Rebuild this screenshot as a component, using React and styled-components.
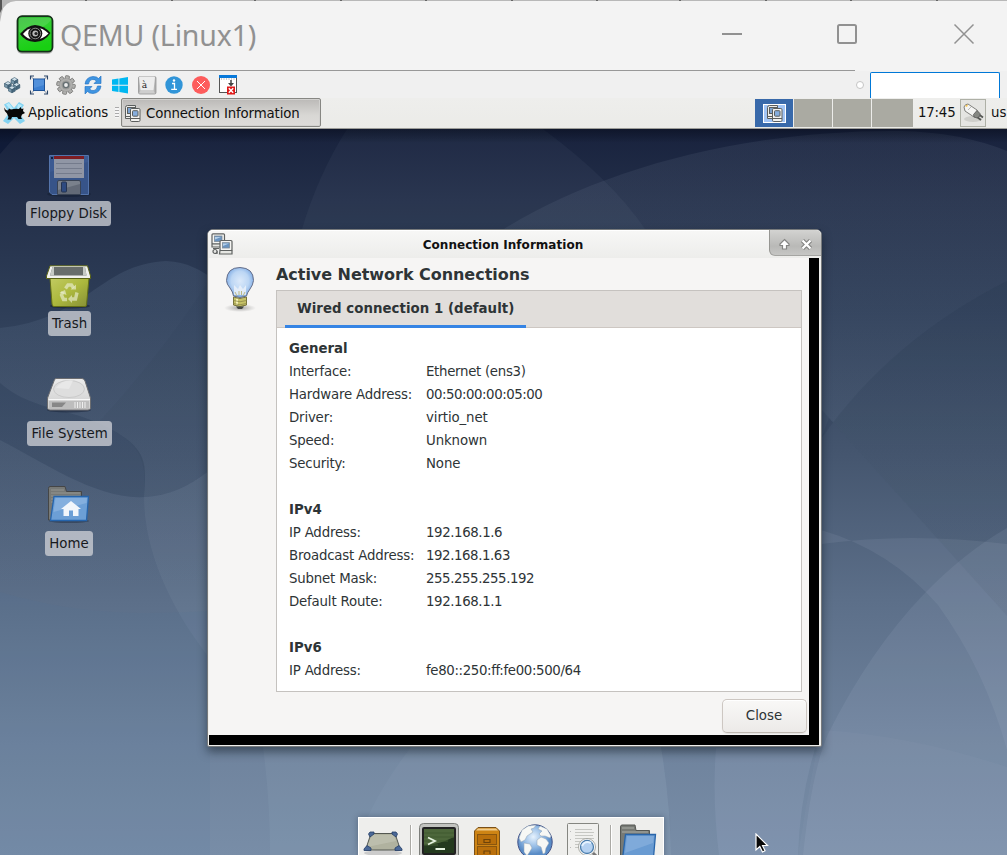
import React from "react";
import styled, { createGlobalStyle } from "styled-components";

const GlobalStyle = createGlobalStyle`
  html, body { margin: 0; padding: 0; overflow: hidden; }
  body { background: #f2f2f2; }
  * { box-sizing: border-box; }
  svg { display: block; flex: none; }
`;

const Screen = styled.div`
  width: 1007px;
  height: 855px;
  display: flex;
  flex-direction: column;
  overflow: hidden;
  font-family: "DejaVu Sans", sans-serif;
  font-size: 13.33px;
  color: #2e3436;
`;

const TitleBar = styled.header`
  height: 71px;
  flex: none;
  position: relative;
  display: flex;
  align-items: flex-start;
  background: #f3f3f3;
  padding: 15px 32px 0 15px;
`;
const FrameEdge = styled.svg`
  position: absolute;
  left: 0;
  top: 0;
`;
const AppTitle = styled.h1`
  margin: 0 0 0 5px;
  font: 400 28.5px/40px "Noto Sans", sans-serif;
  letter-spacing: -0.15px;
  color: #919191;
  white-space: nowrap;
`;
const WindowControls = styled.div`
  display: flex;
  justify-content: space-between;
  width: 254px;
  margin: 7px 0 0 auto;
`;

const Toolbar = styled.div`
  height: 27px;
  flex: none;
  display: flex;
  align-items: flex-start;
  gap: 5px;
  padding: 3px 7px 0 1px;
  background: #f0f0f0;
`;
const Spacer = styled.div`
  flex: 1;
`;
const Knob = styled.div`
  width: 8px;
  height: 8px;
  margin: 7px 1px 0 0;
  border-radius: 50%;
  border: 1px solid #c4c4c4;
  background: #fff;
`;
const SearchField = styled.div`
  width: 130px;
  height: 26px;
  margin-top: -2px;
  border: 1px solid #0078d7;
  border-bottom: 0;
  border-radius: 2px 2px 0 0;
  background: #fff;
`;

const Panel = styled.nav`
  height: 31px;
  flex: none;
  display: flex;
  align-items: center;
  background: linear-gradient(#eeeeec, #ebebe8);
  border-bottom: 1px solid #9c9c98;
  color: #111;
  padding: 0 0 1px 3px;
  white-space: nowrap;
  overflow: hidden;
`;
const MenuLabel = styled.span`
  margin-left: 3px;
  width: 87px;
  line-height: 28px;
  letter-spacing: -0.1px;
`;
const Grip = styled.div`
  width: 4px;
  height: 11px;
  margin-right: 2px;
  background: repeating-linear-gradient(#aaa 0 1px, #f6f6f6 1px 3px);
`;
const TaskButton = styled.div`
  width: 200px;
  height: 29px;
  display: flex;
  align-items: center;
  gap: 5px;
  padding: 2px 0 0 2px;
  border: 1px solid #878783;
  border-radius: 2px;
  background: linear-gradient(#bbb9b7, #d8d7d4 60%, #dddbd9);
  box-shadow: inset 0 0 0 1px #d2d1cf;
  letter-spacing: -0.15px;
`;
const Pager = styled.div`
  display: flex;
  gap: 1px;
  height: 28px;
  margin-left: auto;
`;
const Workspace = styled.div`
  width: ${(p) => p.$w}px;
  background: ${(p) => (p.$active ? "#3869aa" : "#aaaaa2")};
  display: flex;
  align-items: center;
  justify-content: center;
`;
const MiniWindow = styled.div`
  width: 23px;
  height: 19px;
  border: 1px solid #fff;
  background: #a2c5f6;
  display: flex;
  align-items: center;
  justify-content: center;
  margin-top: 1px;
`;
const Clock = styled.span`
  width: 47px;
  padding-left: 5px;
  line-height: 28px;
  letter-spacing: -0.2px;
`;
const TrayButton = styled.div`
  width: 26px;
  height: 28px;
  border: 1px solid #aeb0a6;
  background: #e5e5e2;
  display: flex;
  align-items: center;
  justify-content: center;
`;
const UserName = styled.span`
  width: 21px;
  padding-left: 5px;
`;

const Desktop = styled.main`
  flex: 1;
  position: relative;
  overflow: hidden;
`;
const Wallpaper = styled.svg`
  position: absolute;
  inset: 0;
`;
const IconColumn = styled.div`
  position: relative;
  width: 138px;
  padding-top: 22px;
  display: flex;
  flex-direction: column;
`;
const Shortcut = styled.div`
  height: 110px;
  display: flex;
  flex-direction: column;
  align-items: center;
`;
const ShortcutLabel = styled.span`
  height: 25px;
  margin: 2px 0 0 ${(p) => p.$shift}px;
  line-height: 25px;
  padding: 0 4px;
  border-radius: 3.5px;
  background: rgba(203, 205, 212, 0.79);
  color: #16191d;
  white-space: nowrap;
`;

const Dialog = styled.section`
  position: absolute;
  left: 207px;
  top: 100px;
  width: 615px;
  height: 518px;
  display: flex;
  flex-direction: column;
  border: 1px solid #777a7c;
  border-radius: 6px 6px 2px 2px;
  background: #eeeeec;
  padding: 0 2px 1px 1px;
  box-shadow: 0 5px 10px rgba(10, 20, 30, 0.5);
`;
const DialogBar = styled.div`
  height: 28px;
  flex: none;
  display: flex;
  align-items: center;
  margin: 0 -2px 0 -1px;
  border-radius: 5px 5px 0 0;
  background: linear-gradient(#f7f7f6, #ededeb);
  box-shadow: inset 0 1px 0 #fff;
  padding-left: 3px;
`;
const DialogTitle = styled.h2`
  flex: 1;
  margin: 0;
  padding: 1px 18px 0 22px;
  text-align: center;
  font: 700 12px/28px "DejaVu Sans", sans-serif;
  letter-spacing: 0.03px;
  color: #111;
`;
const DialogButtons = styled.div`
  width: 52px;
  height: 26px;
  align-self: flex-start;
  display: flex;
  align-items: center;
  justify-content: space-between;
  padding: 3px 8px 0 8px;
  border-left: 1px solid #969692;
  border-bottom: 1px solid #a5a5a2;
  border-radius: 0 5px 0 6px;
  background: linear-gradient(#d3d3d1, #b9b9b7 65%, #c6c6c4);
`;
const Backing = styled.div`
  flex: 1;
  background: #000;
  padding: 0 10px 10px 0;
  display: flex;
`;
const DialogBody = styled.div`
  flex: 1;
  display: flex;
  background: #f6f5f4;
`;
const BulbSlot = styled.div`
  width: 67px;
  padding: 6px 0 0 14px;
`;
const Content = styled.div`
  flex: 1;
  display: flex;
  flex-direction: column;
  padding-right: 2px;
`;
const Heading = styled.h3`
  margin: 0;
  height: 32px;
  font: 700 16px/33px "DejaVu Sans", sans-serif;
  letter-spacing: -0.04px;
`;
const Notebook = styled.div`
  width: 526px;
  height: 402px;
  border: 1px solid #c5c2bf;
  background: #fff;
`;
const TabStrip = styled.div`
  height: 37px;
  padding-left: 8px;
  background: #e1dedb;
  border-bottom: 1px solid #cdc7c2;
  display: flex;
`;
const Tab = styled.div`
  width: 241px;
  height: 37px;
  padding-left: 12px;
  border-bottom: 3px solid #3584e4;
  font-weight: 700;
  line-height: 35px;
  letter-spacing: 0.04px;
  white-space: nowrap;
`;
const InfoGrid = styled.dl`
  margin: 0;
  padding: 9px 0 0 12px;
  display: grid;
  grid-template-columns: 137px 1fr;
  grid-auto-rows: 23px;
  line-height: 23px;
  white-space: nowrap;
`;
const Group = styled.dt`
  grid-column: 1 / -1;
  font-weight: 700;
`;
const Blank = styled.div`
  grid-column: 1 / -1;
`;
const Label = styled.dt`
  letter-spacing: -0.18px;
`;
const Value = styled.dd`
  margin: 0;
  letter-spacing: ${(p) => p.$track}px;
`;
const CloseButton = styled.button`
  align-self: flex-end;
  width: 85px;
  height: 34px;
  margin-top: 7px;
  border: 1px solid #cdc7c2;
  border-bottom-color: #bfb8b1;
  border-radius: 5px;
  background: linear-gradient(#f9f8f7, #eceae8);
  box-shadow: inset 0 1px #fff, 0 1px 1px rgba(0, 0, 0, 0.08);
  font: 400 13.33px "DejaVu Sans", sans-serif;
  color: #2e3436;
  padding: 0 1px 2px 0;
`;

const Dock = styled.div`
  position: absolute;
  left: 358px;
  top: 688px;
  width: 306px;
  height: 50px;
  display: flex;
  align-items: flex-start;
  background: #eeeeec;
  border: 1px solid #fff;
  padding: 3px 0 0;
  box-shadow: 0 0 6px rgba(20, 30, 50, 0.35);
`;
const DockSlot = styled.div`
  width: 48px;
  display: flex;
  justify-content: center;
`;
const DockSeparator = styled.div`
  width: 2px;
  height: 40px;
  margin: 4px ${(p) => p.$r}px 0 ${(p) => p.$l}px;
  background: linear-gradient(90deg, #aaa9a4 50%, #fff 50%);
`;
const Pointer = styled.svg`
  position: absolute;
  left: 755px;
  top: 704px;
`;

const EyeLogo = () => (
  <svg width="40" height="40" viewBox="0 0 40 40">
    <defs>
      <linearGradient id="eyeg" x1="0" y1="0" x2="0.3" y2="1">
        <stop offset="0" stopColor="#35b83a" />
        <stop offset="0.45" stopColor="#2fd02e" />
        <stop offset="1" stopColor="#18cf12" />
      </linearGradient>
    </defs>
    <rect x="2" y="3" width="36" height="36" rx="5" fill="#000" opacity=".25" />
    <rect x="2.500" y="1.200" width="35" height="35.500" rx="4.500" fill="url(#eyeg)" stroke="#153019" strokeWidth="1.800" />
    <path d="M4 3h32v2Q28 16 4 17z" fill="#fff" opacity=".12" />
    <path d="M5 19Q12 10.500 20 10Q29 10.500 35.500 18Q30 26.500 20 27Q10 26.500 5 19z" fill="#111" />
    <path d="M8 19Q13 12.500 20 12.500Q28 12.500 33.500 18.500Q28 24.500 20 24.500Q12 24.500 8 19z" fill="#fff" />
    <circle cx="20.300" cy="18.500" r="7" fill="#111" />
    <circle cx="20.300" cy="18.500" r="5.300" fill="none" stroke="#8a8a8a" strokeWidth="1" />
    <circle cx="20.300" cy="18.500" r="2.900" fill="#b9b9b9" />
    <circle cx="21" cy="18.500" r="1.600" fill="#222" />
  </svg>
);

const Ico = ({ children }) => (
  <svg width="22" height="22" viewBox="-11 -11 22 22">{children}</svg>
);

const Cubes = () => (
  <Ico>
    {[[2.5, -4], [-4, 0], [4.5, 1.2], [0, 4.3]].map(([x, y], i) => (
      <g key={i} transform={`translate(${x} ${y})`} stroke="#36566a" strokeWidth=".6">
        <path d="M-3.500-1.500L0-3.500L3.300-1.500L0 .3z" fill="#cfe0ea" />
        <path d="M-3.500-1.500L0 .3V3.500L-3.500 1.800z" fill="#7796a9" />
        <path d="M3.300-1.500L0 .3V3.500L3.300 1.800z" fill="#48697f" />
      </g>
    ))}
  </Ico>
);
const Fullscreen = () => (
  <Ico>
    <rect x="-5.500" y="-6" width="11" height="11.500" fill="#3d80d2" stroke="#1d5298" />
    <path d="M-5-5.500H5V0L-5 3z" fill="#6aa2e4" opacity=".5" />
    <path d="M-8.500-5.500V-9H-5M5-9H8.500V-5.500M8.500 5.500V9H5M-5 9H-8.500V5.500" fill="none" stroke="#2d4668" strokeWidth="1.100" />
    <path d="M-8.500-9L-5.500-6M8.500-9L5.500-6M8.500 9L5.500 6M-8.500 9L-5.500 6" stroke="#2d4668" strokeWidth=".6" />
  </Ico>
);
const Gear = () => (
  <Ico>
    {[0, 45, 90, 135].map((a) => (
      <rect key={a} x="-2" y="-9.300" width="4" height="18.600" rx=".8" fill="#b0b0ae" stroke="#747472" strokeWidth=".8" transform={`rotate(${a + 10})`} />
    ))}
    <circle r="6.500" fill="#b0b0ae" stroke="#888" strokeWidth=".3" />
    <circle r="4.500" fill="#9a9a98" />
    <circle r="2.600" fill="#ececec" stroke="#667073" strokeWidth="1.400" />
  </Ico>
);
const Refresh = () => (
  <Ico>
    <path d="M-8-1Q-7-8 0-8.500Q4-8.500 5.500-6.500L8-9V-1.500H1L3.500-4Q1.500-6 -1-5.500Q-4-5-4.500-1z" fill="#3f95e2" stroke="#1b6cbf" strokeWidth=".6" />
    <path d="M8 1Q7 8 0 8.500Q-4 8.500-5.500 6.500L-8 9V1.500H-1L-3.500 4Q-1.500 6 1 5.500Q4 5 4.500 1z" fill="#3f95e2" stroke="#1b6cbf" strokeWidth=".6" />
  </Ico>
);
const Win = () => (
  <Ico>
    <path d="M-8-5.500L-1.500-6.500V-.3H-8zM-.7-6.600L8-8V-.3H-.7zM-8 .7H-1.500V7L-8 6zM-.7 .7H8V8.500L-.7 7.100z" fill="#00b7f1" />
  </Ico>
);
const KeyA = () => (
  <Ico>
    <rect x="-8.500" y="-8.500" width="17.500" height="17.500" rx="1.500" fill="#b4b4b4" stroke="#8b8b8b" strokeWidth=".7" />
    <path d="M-8-7.500Q-8-8.500-7-8.500H7Q8-8.500 8-7.500L6.500 5.500H-6.500z" fill="#ededed" />
    <path d="M-6.500 5.500H6.500L8 8.500H-8z" fill="#cecece" />
    <text x="-5.300" y="2.600" fontSize="9" fill="#222" fontFamily="DejaVu Serif, serif">à</text>
  </Ico>
);
const Info = () => (
  <Ico>
    <circle r="8.700" fill="#3195d8" />
    <path d="M-2-1.500H.5V4M-2.800 4.300H3" stroke="#fff" strokeWidth="1.300" fill="none" />
    <circle cx="0" cy="-4.500" r="1.200" fill="#fff" />
  </Ico>
);
const CloseRed = () => (
  <Ico>
    <circle r="9" fill="#fd5c5c" />
    <path d="M-4-4L4 4M4-4L-4 4" stroke="#fff" strokeWidth="1" />
  </Ico>
);
const WinDown = () => (
  <Ico>
    <rect x="-8.500" y="-8.500" width="17" height="16" fill="#fff" stroke="#555" strokeWidth="1" />
    <rect x="-9" y="-10" width="18" height="3" fill="#0879da" />
    <path d="M-7-6H8" stroke="#999" strokeDasharray="1 1.500" />
    <path d="M3-5V-1" stroke="#444" strokeWidth="1.500" />
    <path d="M0-2H6L3 1.500z" fill="#444" />
    <rect x="-1" y="1.500" width="8" height="8" fill="#df1717" />
    <path d="M.800 3.300L5.200 7.700M5.200 3.300L.800 7.700" stroke="#fff" strokeWidth="1.500" />
  </Ico>
);

const Mouse = () => (
  <svg width="22" height="24" viewBox="0 0 22 24">
    <path d="M1 3.500L6 1L11 7L16 1L21 4L16 12L22 20L17 23L11 17L5 23L0 20L6 12z" fill="#84d3f1" />
    <path d="M3 3.500L6 2L11 9L9 11zM15 3L19 4L13 12z" fill="#b9ebfb" />
    <path d="M1 6.500Q2 9 5 9.500L6 7.500L8 8.500Q12 7.500 16 8L17.500 6L18.500 8L20.500 7.500L20 10L22 12L19 13.500L18 16L19 18H15.500L14 16H9L8 18.500H4.500L5.500 16L4 12.500Q1 10 1 6.500z" fill="#080808" />
  </svg>
);

const NetIcon = ({ w = 17, h = 17 }) => (
  <svg width={w} height={h} viewBox="0 0 22 22">
    <g stroke="#5f6261" strokeWidth="1.200">
      <rect x="1" y=".8" width="12.500" height="10.200" rx="1" fill="#f4f4f2" />
      <rect x="3.500" y="3" width="7.500" height="5.500" fill="#6993c0" stroke="#7d8a96" strokeWidth=".8" />
      <path d="M1 11H10V14H1z" fill="#e6e7e3" />
      <path d="M2 15.500H8M6 18V21" fill="none" />
      <circle cx="4" cy="18.500" r="2" fill="#e7e7e5" />
      <rect x="9" y="7.500" width="12" height="10" rx="1" fill="#f4f4f2" />
      <rect x="11.500" y="9.700" width="7" height="5.300" fill="#6993c0" stroke="#7d8a96" strokeWidth=".8" />
      <path d="M9 17.500H21V21H8.500z" fill="#e6e7e3" />
    </g>
    <path d="M12 10.500H18L12 13zM4 4H10L4 6.500z" fill="#b4d0ea" />
  </svg>
);

const NetIconSmall = () => (
  <svg width="17" height="17" viewBox="0 0 17 17">
    <g stroke="#5b5e5d" strokeWidth="1">
      <path d="M1.500 13.500V2.500Q1.500.5 3.500.5H11.500V13.500z" fill="#ededeb" />
      <rect x="3.500" y="2.500" width="7" height="6" fill="#7ba2d0" />
      <path d="M1.500 11.500H6" fill="none" />
      <rect x="6.500" y="3.500" width="9.500" height="13" rx="1.200" fill="#f2f2f0" />
      <rect x="8.500" y="5.700" width="5.500" height="5.500" rx=".8" fill="#86aede" />
      <path d="M6.500 13.500H16" fill="none" />
    </g>
  </svg>
);
const Plug = () => (
  <svg width="22" height="22" viewBox="0 0 22 22">
    <ellipse cx="11" cy="17" rx="9" ry="3" fill="#cfcfcb" />
    <path d="M17 12.500L21 15.500M15 15L19 18" stroke="#555753" strokeWidth="1.800" />
    <path d="M2 5Q3 2 6 2L15 8L17 13L12 15L3 9z" fill="#f5f5f3" stroke="#73736f" strokeWidth=".9" />
    <path d="M12 15L11.500 12.500L15 8.500L18 11.500L18 14L15 16z" fill="#858782" stroke="#555" strokeWidth=".8" />
    <path d="M3 4Q4 2.500 6 2.500L5 5z" fill="#f6c34a" />
    <path d="M6 8L9 5" stroke="#bbb" />
  </svg>
);

const Floppy = () => (
  <svg width="48" height="48" viewBox="0 0 48 48">
    <ellipse cx="24" cy="43" rx="22" ry="3" fill="#10182b" opacity=".4" />
    <g transform="translate(0 1)">
      <path d="M4.500 3.500H43.500V42.500H7L4.500 40z" fill="#3c5a92" stroke="#5474ab" />
      <path d="M5 20L43 10V42H7L5 40z" fill="#304b7d" opacity=".4" />
      <rect x="9" y="4" width="30" height="22" fill="#9096a5" />
      <rect x="9" y="4" width="30" height="3" fill="#7e1d23" />
      <path d="M11 11.500H37M11 16.500H37M11 21.500H37" stroke="#747b8c" />
      <rect x="6" y="5" width="2" height="2" fill="#10203e" />
      <path d="M12.500 42.500V30Q12.500 28.500 14 28.500H34Q35.500 28.500 35.500 30V42.500z" fill="#7a818c" stroke="#394354" />
      <path d="M13 38L35 32V42H13z" fill="#545c69" opacity=".6" />
      <rect x="16.500" y="30" width="5" height="10" rx="1" fill="#2e4a80" stroke="#253451" />
    </g>
  </svg>
);
const Trash = () => (
  <svg width="48" height="48" viewBox="0 0 48 48">
    <defs><linearGradient id="bin" x2="1" y2="1"><stop stopColor="#c2cb62" /><stop offset=".5" stopColor="#acb83d" /><stop offset="1" stopColor="#858f37" /></linearGradient></defs>
    <ellipse cx="25" cy="45" rx="20" ry="2.500" fill="#111a29" opacity=".5" />
    <g transform="translate(0 2)">
      <path d="M5 15H44L41.500 42Q41.500 43.500 40 43.500H9Q7 43.500 7 41z" fill="url(#bin)" stroke="#646f15" />
      <path d="M5 2.800H42.500L45.500 13V15.500H1.500V13z" fill="#f1f1ef" stroke="#596315" />
      <path d="M7.500 4H40L41.500 12.500H5z" fill="#686d6b" />
      <path d="M7.500 4H9V12.500H5zM38 4H40L41.500 12.500H38z" fill="#c6cac5" />
      <g fill="none" stroke="#e8eccb" strokeWidth="3.400" opacity=".68">
        <path d="M20.500 25.500L23 22H26.500L28.500 25M32 29.500L30.500 36H27M22 36.500H18.500L16.500 32L18 29" />
      </g>
      <g fill="#e8eccb" opacity=".68"><path d="M25.500 26.500H31V21.500zM27 32V40L23 36zM14.500 29.500L20 27L21.500 32z" /></g>
    </g>
  </svg>
);
const Drive = () => (
  <svg width="48" height="48" viewBox="0 0 48 48">
    <defs><linearGradient id="drv" y2="1" x2="0"><stop stopColor="#ebebeb" /><stop offset="1" stopColor="#cecece" /></linearGradient></defs>
    <ellipse cx="24" cy="39" rx="22" ry="2.500" fill="#172236" opacity=".5" />
    <path d="M11 7.500H37Q39 7.500 40 10L45.500 27V37Q45.500 39 43 39H5Q2.500 39 2.500 37V27L9 10Q9.500 7.500 11 7.500z" fill="url(#drv)" stroke="#6c6d70" />
    <ellipse cx="24" cy="18" rx="15.500" ry="8.500" fill="#dedede" stroke="#cbcbcb" />
    <path d="M11 17Q18 8 28 9.500L24 18z" fill="#e8e8e8" />
    <path d="M3.500 28.500H45" stroke="#f8f8f8" />
    <rect x="4" y="30" width="40" height="8" fill="#bdbdbd" />
    <path d="M7 31.500H21L17 36H7z" fill="#878787" />
    <path d="M30 31V37M32.500 31V37M35 31V37M37.500 31V37M40 31V37" stroke="#eee" />
  </svg>
);
const HomeFolder = () => (
  <svg width="48" height="48" viewBox="0 0 48 48">
    <ellipse cx="24" cy="40" rx="20" ry="2" fill="#172236" opacity=".4" />
    <path d="M3.500 39V7.500Q3.500 5.500 5 5.500H20L21.500 10.500H36.500V39z" fill="#777976" stroke="#454646" />
    <path d="M6 9H19M6 12H35M6 15H35M6 18H35M6 21H19" stroke="#949691" />
    <path d="M9 15.500H43.500L41.500 39.500H5.500z" fill="#6c9fd6" stroke="#2564ac" strokeWidth="1.300" />
    <path d="M10.500 17H42L41.500 22L8.500 31z" fill="#9cc0e6" opacity=".5" />
    <path d="M26 20L36 28H33.500V35H28V29.500H24V35H18.500V28H16z" fill="#f2f6fb" />
  </svg>
);

const Bulb = () => (
  <svg width="34" height="50" viewBox="0 0 34 50">
    <defs>
      <radialGradient id="bulb" cx=".5" cy=".45"><stop stopColor="#dbe9fa" /><stop offset=".65" stopColor="#bcd6f4" /><stop offset="1" stopColor="#86b0e6" /></radialGradient>
      <radialGradient id="bsh"><stop stopColor="#666" stopOpacity=".6" /><stop offset="1" stopColor="#888" stopOpacity="0" /></radialGradient>
    </defs>
    <ellipse cx="17" cy="44" rx="16" ry="4" fill="url(#bsh)" />
    <path d="M10.500 32Q10 28 7 24Q3.500 20 3.500 16.500Q4 3.500 17 3.500Q30.500 4 30.500 16.500Q30 21 27 25Q24 29 23.500 32Q17 35 10.500 32z" fill="url(#bulb)" stroke="#666f8a" />
    <path d="M11 31L11 21L15 25L17 21L20 25L23 21L23 31z" fill="#edf3fa" opacity=".8" />
    <path d="M14 32L12 28M20 32L22 28M16 31V27M18.500 31V27" stroke="#b5b47c" strokeWidth=".9" />
    <path d="M10.500 33Q17 36 23.500 33V41Q17 44 10.500 41z" fill="#c6c267" stroke="#77733c" />
    <path d="M14 35V41" stroke="#f6f2b5" strokeWidth="2" />
    <path d="M10.500 36.500Q17 39 23.500 36.500M10.500 39.500Q17 42 23.500 39.500" stroke="#8c8849" strokeWidth=".8" fill="none" />
    <path d="M13 42.500H21L19 45H15z" fill="#444845" />
  </svg>
);

const DeskIcon = () => (
  <svg width="42" height="42" viewBox="0 0 42 42">
    <ellipse cx="21" cy="32" rx="19" ry="3" fill="#ccc" />
    <path d="M9 12.500H33L38.500 29H3.500z" fill="#b0b29f" stroke="#535751" />
    <path d="M10 14H32L34 20L5 26z" fill="#c2c3b3" opacity=".7" />
    <g fill="#4a6897" stroke="#263f67" strokeWidth=".8">
      <path d="M6.500 13L8 11H12V13L8 16zM35.500 13L34 11H30V13L34 16zM2 28L5 24.500L9 27V29.500H2zM40 28L37 24.500L33 27V29.500H40z" />
    </g>
  </svg>
);
const TerminalIcon = () => (
  <svg width="42" height="42" viewBox="0 0 42 42">
    <rect x="1.500" y="2.500" width="39" height="37" rx="4" fill="#c3c4c0" stroke="#7d7f7b" />
    <rect x="5" y="7" width="32" height="26" rx="1" fill="#243a1e" stroke="#222" strokeWidth="2" />
    <path d="M6 8H36V16Q20 24 6 24z" fill="#4d673b" />
    <path d="M6 12H36M6 16H36M6 20H30M6 24H20" stroke="#405b31" />
    <path d="M10 16.500L17 20L10 23.500" fill="none" stroke="#e5f2df" strokeWidth="1.800" />
    <path d="M17.500 28H27" stroke="#e5f2df" strokeWidth="2" />
    <circle cx="29" cy="36" r="1.500" fill="#85bd47" />
  </svg>
);
const CabinetIcon = () => (
  <svg width="42" height="42" viewBox="0 0 42 42">
    <path d="M8.500 42V10L12 6.500H30L33.500 10V42z" fill="#ce8414" stroke="#79501a" />
    <path d="M12 7.500H30L32 9.500H10z" fill="#f0cc8c" />
    <rect x="11.500" y="13.500" width="19" height="10" fill="#b96f0b" stroke="#8a560e" />
    <rect x="11.500" y="25.500" width="19" height="12" fill="#b96f0b" stroke="#8a560e" />
    <path d="M18 21.500V18.500H24V21.500zM18 33V30H24V33" fill="none" stroke="#6e4309" strokeWidth="1.200" />
  </svg>
);
const GlobeIcon = () => (
  <svg width="42" height="42" viewBox="0 0 42 42">
    <defs><radialGradient id="glb" cx=".45" cy=".35"><stop stopColor="#e7f2fd" /><stop offset=".6" stopColor="#92bae5" /><stop offset="1" stopColor="#5a8cc6" /></radialGradient></defs>
    <circle cx="21" cy="21" r="17.200" fill="url(#glb)" stroke="#415086" />
    <path d="M5 17L8 9L14 5L22 4L20 7L17 8L19 11L13 15L11 19L7 21zM10 22L16 23L18 27L15 32L13 35L10 31zM24 8L26 5L33 8L37 15L36 17L31 15L27 15L25 13L28 10zM23 19L27 16L32 18L35 22L32 27L31 32L29 33L27 26L23 24z" fill="#f7f8f5" stroke="#90a2b2" strokeWidth="0.500" />
  </svg>
);
const SearchDocIcon = () => (
  <svg width="42" height="42" viewBox="0 0 42 42">
    <rect x="5.500" y="2.500" width="31" height="42" rx="1" fill="#f0f0ee" stroke="#858681" />
    <path d="M13 8.500H30M13 11.500H32M13 14.500H31M13 17.500H32M13 20.500H24M13 23.500H23M13 26.500H22" stroke="#c6c7c3" />
    <path d="M8.500 10V34" stroke="#bbb" strokeDasharray="1 7" />
    <circle cx="25" cy="26" r="8.500" fill="#fff" stroke="#94968f" strokeWidth=".8" />
    <circle cx="25" cy="26" r="6.500" fill="#b4d1f1" stroke="#4a7dac" strokeWidth="1.300" />
    <path d="M20 25Q23 19 29 22" stroke="#e4f2ff" strokeWidth="2" fill="none" />
    <path d="M31 32L36 37" stroke="#777" strokeWidth="3" />
  </svg>
);
const FolderIcon = () => (
  <svg width="42" height="42" viewBox="0 0 42 42">
    <path d="M3.500 40V6Q3.500 4 5 4H18L19 9.500H32.500V40z" fill="#777a75" stroke="#555753" />
    <path d="M5 7H17M5 11H31" stroke="#91948e" strokeWidth="2" />
    <path d="M8.500 13.500H38.500L36 42H5z" fill="#699bd2" stroke="#2865aa" strokeWidth="1.300" />
    <path d="M10 15H37L36 22L8 32z" fill="#8db4df" opacity=".6" />
  </svg>
);

const shortcuts = [
  { name: "Floppy Disk", Icon: Floppy, shift: -1 },
  { name: "Trash", Icon: Trash, shift: 1 },
  { name: "File System", Icon: Drive, shift: 1 },
  { name: "Home", Icon: HomeFolder, shift: 0 },
];

const groups = [
  { title: "General", rows: [["Interface:", "Ethernet (ens3)", -0.3], ["Hardware Address:", "00:50:00:00:05:00", -0.47], ["Driver:", "virtio_net", -0.1], ["Speed:", "Unknown", -0.1], ["Security:", "None", -0.1]] },
  { title: "IPv4", rows: [["IP Address:", "192.168.1.6", -0.4], ["Broadcast Address:", "192.168.1.63", -0.42], ["Subnet Mask:", "255.255.255.192", -0.42], ["Default Route:", "192.168.1.1", -0.4]] },
  { title: "IPv6", rows: [["IP Address:", "fe80::250:ff:fe00:500/64", -0.36]] },
];

const Background = () => (
  <Wallpaper width="1007" height="726" viewBox="0 129 1007 726">
    <defs>
      <linearGradient id="sky" x1="0" y1="0" x2="0" y2="1">
        <stop offset="0" stopColor="#18223d" />
        <stop offset=".1" stopColor="#232f49" />
        <stop offset=".25" stopColor="#2e3e58" />
        <stop offset=".45" stopColor="#45566f" />
        <stop offset=".65" stopColor="#5c6f89" />
        <stop offset=".85" stopColor="#6f839d" />
        <stop offset="1" stopColor="#788da7" />
      </linearGradient>
      <linearGradient id="shade" x1="0" y1="0" x2="0" y2="1">
        <stop stopColor="#060a18" stopOpacity=".5" />
        <stop offset="1" stopColor="#060a18" stopOpacity="0" />
      </linearGradient>
      <linearGradient id="hill" x1="0" y1="0" x2="0" y2="1">
        <stop stopColor="#8ba3bf" stopOpacity=".13" />
        <stop offset="1" stopColor="#8ba3bf" stopOpacity="0" />
      </linearGradient>
      <linearGradient id="fade" x1="0" y1="0" x2="0" y2="1">
        <stop stopColor="#a9b9cd" stopOpacity=".09" />
        <stop offset="1" stopColor="#a9b9cd" stopOpacity=".03" />
      </linearGradient>
    </defs>
    <rect y="129" width="1007" height="726" fill="url(#sky)" />
    <path d="M0 129H23Q10 142 0 154z" fill="#06122f" opacity=".5" />
    <path d="M0 328C85 320 100 264 166 261C188 262 200 270 215 280V592H0z" fill="url(#hill)" />
    <path d="M0 383C30 409 62 407 98 423C136 440 146 454 145 478C145 488 144 493 144 497C98 500 45 463 0 440z" fill="#1a2d4b" opacity=".22" />
    <path d="M144 497C168 496 190 487 215 466V270C180 330 120 400 98 423C136 440 148 454 144 497z" fill="#1a2d4b" opacity=".06" />
    <path d="M144 497C168 496 190 487 215 466V665C170 610 144 550 144 497z" fill="#b3c4d8" opacity=".07" />
    <path d="M0 592C70 612 120 616 210 611V855H0z" fill="#4e73a0" opacity=".1" />
    <path d="M347 129Q318 175 302 229H645Q612 180 543 129z" fill="#a9b9cd" opacity=".055" />
    <path d="M504 229C600 170 740 130 900 131Q960 132 1007 151V616L821 409V229z" fill="url(#fade)" />
    <path d="M821 439Q890 340 1007 281V616L829 418z" fill="#12233e" opacity=".1" />
    <path d="M821 530Q890 550 938 605Q985 670 1007 750V544Q910 532 821 544z" fill="#b7c8dc" opacity=".1" />
    <path d="M803 855Q812 770 828 734Q870 650 925 593Q965 552 1007 528V855z" fill="#c5d4e5" opacity=".09" />
    <path d="M716 748H821V730Q800 790 798 855H719Q712 800 716 748z" fill="#c1d2e7" opacity=".1" />
    <path d="M821 730Q910 735 1007 767V855H798Q808 790 821 730z" fill="#c1d2e7" opacity=".04" />
    <path d="M263 747H661Q670 800 671 855H270Q270 800 263 747z" fill="#b3c7dc" opacity=".08" />
    <path d="M411 747H661Q670 800 671 855H353Q370 800 411 747z" fill="#c4d2e2" opacity=".05" />
    <rect y="129" width="1007" height="14" fill="url(#shade)" />
  </Wallpaper>
);

export default function App() {
  return (
    <Screen>
      <GlobalStyle />
      <TitleBar>
        <FrameEdge width="1007" height="71">
          <path d="M0 0H1007V1H16Q4 2 2 12L0 22z" fill="#b8b8b8" />
          <path d="M0 0H2V9L0 13z" fill="#555" />
          <path d="M85 0h2v1h-2zM171 0h2v1h-2zM254 0h2v1h-2zM340 0h2v1h-2zM425 0h2v1h-2zM511 0h2v1h-2zM596 0h2v1h-2zM679 0h2v1h-2zM765 0h2v1h-2zM850 0h2v1h-2zM936 0h2v1h-2z" fill="#666" />
          <path d="M0 70.500H855" stroke="#989898" />
        </FrameEdge>
        <EyeLogo />
        <AppTitle>QEMU (Linux1)</AppTitle>
        <WindowControls>
          <svg width="22" height="24"><path d="M1 12H21" stroke="#919191" strokeWidth="2" /></svg>
          <svg width="22" height="24"><rect x="1" y="3" width="18" height="18" rx="1.500" fill="none" stroke="#919191" strokeWidth="2" /></svg>
          <svg width="22" height="24"><path d="M1.500 2.500L20.500 21.500M20.500 2.500L1.500 21.500" stroke="#919191" strokeWidth="1.500" /></svg>
        </WindowControls>
      </TitleBar>

      <Toolbar>
        <Cubes /><Fullscreen /><Gear /><Refresh /><Win /><KeyA /><Info /><CloseRed /><WinDown />
        <Spacer />
        <Knob />
        <SearchField />
      </Toolbar>

      <Panel>
        <Mouse />
        <MenuLabel>Applications</MenuLabel>
        <Grip />
        <TaskButton><NetIconSmall /><span>Connection Information</span></TaskButton>
        <Pager>
          <Workspace $w={38} $active><MiniWindow><NetIconSmall /></MiniWindow></Workspace>
          <Workspace $w={38} />
          <Workspace $w={38} />
          <Workspace $w={41} />
        </Pager>
        <Clock>17:45</Clock>
        <TrayButton><Plug /></TrayButton>
        <UserName>us</UserName>
      </Panel>

      <Desktop>
        <Background />
        <IconColumn>
          {shortcuts.map(({ name, Icon, shift }) => (
            <Shortcut key={name}>
              <Icon />
              <ShortcutLabel $shift={shift}>{name}</ShortcutLabel>
            </Shortcut>
          ))}
        </IconColumn>

        <Dialog>
          <DialogBar>
            <NetIcon w={22} h={22} />
            <DialogTitle>Connection Information</DialogTitle>
            <DialogButtons>
              <svg width="13" height="13" viewBox="0 0 13 13"><path d="M6.500 1.500L11 6V7.500H8.500V11H4.500V7.500H2V6z" fill="#fff" stroke="#858583" strokeWidth="1.200" /></svg>
              <svg width="13" height="13" viewBox="0 0 13 13">
                <path d="M2.500 2.500L10.500 10.500M10.500 2.500L2.500 10.500" stroke="#7f7f7d" strokeWidth="4.400" />
                <path d="M2.500 2.500L10.500 10.500M10.500 2.500L2.500 10.500" stroke="#fff" strokeWidth="2.400" />
              </svg>
            </DialogButtons>
          </DialogBar>
          <Backing>
            <DialogBody>
              <BulbSlot><Bulb /></BulbSlot>
              <Content>
                <Heading>Active Network Connections</Heading>
                <Notebook>
                  <TabStrip><Tab>Wired connection 1 (default)</Tab></TabStrip>
                  <InfoGrid>
                    {groups.map((g, i) => (
                      <React.Fragment key={g.title}>
                        {i > 0 && <Blank />}
                        <Group>{g.title}</Group>
                        {g.rows.map(([k, v, track]) => (
                          <React.Fragment key={k}>
                            <Label>{k}</Label>
                            <Value $track={track}>{v}</Value>
                          </React.Fragment>
                        ))}
                      </React.Fragment>
                    ))}
                  </InfoGrid>
                </Notebook>
                <CloseButton>Close</CloseButton>
              </Content>
            </DialogBody>
          </Backing>
        </Dialog>

        <Dock>
          <DockSlot><DeskIcon /></DockSlot>
          <DockSeparator $l={3} $r={3} />
          <DockSlot><TerminalIcon /></DockSlot>
          <DockSlot><CabinetIcon /></DockSlot>
          <DockSlot><GlobeIcon /></DockSlot>
          <DockSlot><SearchDocIcon /></DockSlot>
          <DockSeparator $l={3} $r={2} />
          <DockSlot><FolderIcon /></DockSlot>
        </Dock>

        <Pointer width="16" height="22" viewBox="0 0 16 22">
          <path d="M1 1V17L4.800 13.500L7.500 19L10 17.800L7.500 12.500H12.500z" fill="#080808" stroke="#fff" strokeWidth="1.200" />
        </Pointer>
      </Desktop>
    </Screen>
  );
}
